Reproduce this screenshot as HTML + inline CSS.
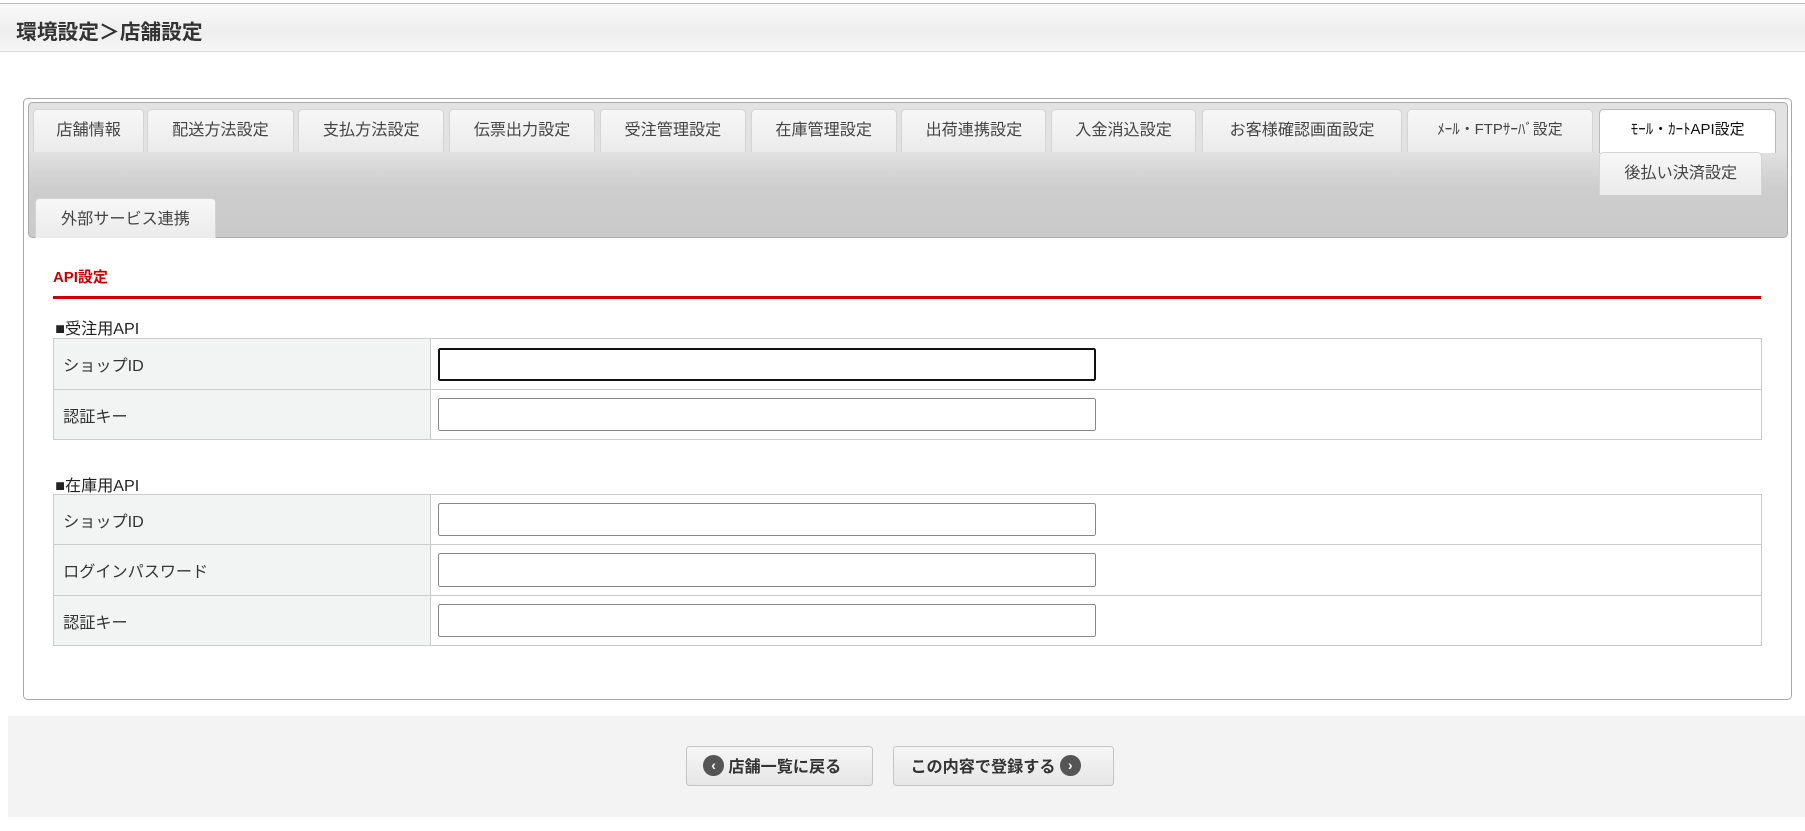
<!DOCTYPE html>
<html><head><meta charset="utf-8"><style>
html,body{margin:0;padding:0;background:#fff}
body{zoom:1.1512;width:1568px;height:722px;position:relative;overflow:hidden;font-family:"Liberation Sans","Noto Sans CJK JP",sans-serif;color:#333}
.abs{position:absolute}
.hdr{left:0;top:3px;width:1568px;height:40px;border-top:1px solid #bbb;border-bottom:1px solid #ddd;background:linear-gradient(#f9f9f9,#eeeeee 60%,#f6f6f6)}
.hdr span{position:absolute;left:14px;top:9px;font-size:18px;font-weight:bold;color:#333}
.panel{left:20px;top:85px;width:1535px;height:521px;border:1px solid #aaa;border-radius:4px}
.bar{left:24px;top:89px;width:1527px;height:116px;border:1px solid #aaa;border-radius:4px;background:linear-gradient(#e2e2e2 0,#e2e2e2 40px,#cdcdcd 75px,#cacaca)}
.tab{position:absolute;height:37px;line-height:35px;font-size:14px;color:#444;text-align:center;border:1px solid #d4d4d4;border-bottom:none;border-radius:4px 4px 0 0;background:linear-gradient(#f7f7f7,#ebebeb);box-sizing:border-box}
.tab.on{background:#fff;border-color:#bbb;color:#111;height:38px}
.h2{left:46px;top:231px;font-size:13px;font-weight:bold;color:#c00}
.red{left:46px;top:257px;width:1484px;height:3px;background:#c00}
.cap{left:48px;font-size:14px;color:#222}
table{position:absolute;left:46px;width:1485px;border-collapse:collapse}
td{border:1px solid #ccc;height:43px;padding:0;font-size:14px;color:#333}
td.l{width:319px;background:#f2f4f3;padding-left:8px}
td.r{padding-left:6px}
.in{width:571px;height:29px;border:1px solid #888;border-radius:2px;box-sizing:border-box}
.in.f{border:2px solid #111}
.foot{left:7px;top:622px;width:1561px;height:88px;background:#f3f3f3}
.btn{position:absolute;top:648px;height:35px;border:1px solid #c4c4c4;border-radius:3px;background:linear-gradient(#f6f6f6,#e6e6e6);font-size:14px;font-weight:bold;color:#333;line-height:35px;box-sizing:border-box}
.ic{display:inline-block;width:18px;height:18px;border-radius:50%;background:#555;color:#fff;font-size:12px;line-height:18px;text-align:center;vertical-align:middle;position:relative;top:-2px}
</style></head><body>
<div class="abs hdr"><span>環境設定＞店舗設定</span></div>
<div class="abs panel"></div>
<div class="abs bar"></div>
<div class="tab" style="left:29px;top:95px;width:96px">店舗情報</div>
<div class="tab" style="left:128px;top:95px;width:127px">配送方法設定</div>
<div class="tab" style="left:259px;top:95px;width:127px">支払方法設定</div>
<div class="tab" style="left:390px;top:95px;width:127px">伝票出力設定</div>
<div class="tab" style="left:521px;top:95px;width:127px">受注管理設定</div>
<div class="tab" style="left:652px;top:95px;width:127px">在庫管理設定</div>
<div class="tab" style="left:783px;top:95px;width:126px">出荷連携設定</div>
<div class="tab" style="left:913px;top:95px;width:126px">入金消込設定</div>
<div class="tab" style="left:1044px;top:95px;width:174px">お客様確認画面設定</div>
<div class="tab" style="left:1222px;top:95px;width:162px;font-size:13px">ﾒｰﾙ・FTPｻｰﾊﾞ設定</div>
<div class="tab on" style="left:1389px;top:95px;width:154px;font-size:13px">ﾓｰﾙ・ｶｰﾄAPI設定</div>
<div class="tab" style="left:1389px;top:132px;width:142px">後払い決済設定</div>
<div class="tab" style="left:30px;top:172px;width:158px;height:35px">外部サービス連携</div>
<div class="abs h2">API設定</div>
<div class="abs red"></div>
<div class="abs cap" style="top:274px">■受注用API</div>
<table style="top:294px">
<tr><td class="l">ショップID</td><td class="r"><div class="in f"></div></td></tr>
<tr><td class="l">認証キー</td><td class="r"><div class="in"></div></td></tr>
</table>
<div class="abs cap" style="top:410px">■在庫用API</div>
<table style="top:429px">
<tr><td class="l">ショップID</td><td class="r"><div class="in"></div></td></tr>
<tr><td class="l">ログインパスワード</td><td class="r"><div class="in"></div></td></tr>
<tr><td class="l">認証キー</td><td class="r"><div class="in"></div></td></tr>
</table>
<div class="abs foot"></div>
<div class="btn" style="left:596px;width:162px;padding-left:14px"><span class="ic">‹</span> 店舗一覧に戻る</div>
<div class="btn" style="left:776px;width:192px;padding-left:14px">この内容で登録する <span class="ic">›</span></div>
</body></html>
